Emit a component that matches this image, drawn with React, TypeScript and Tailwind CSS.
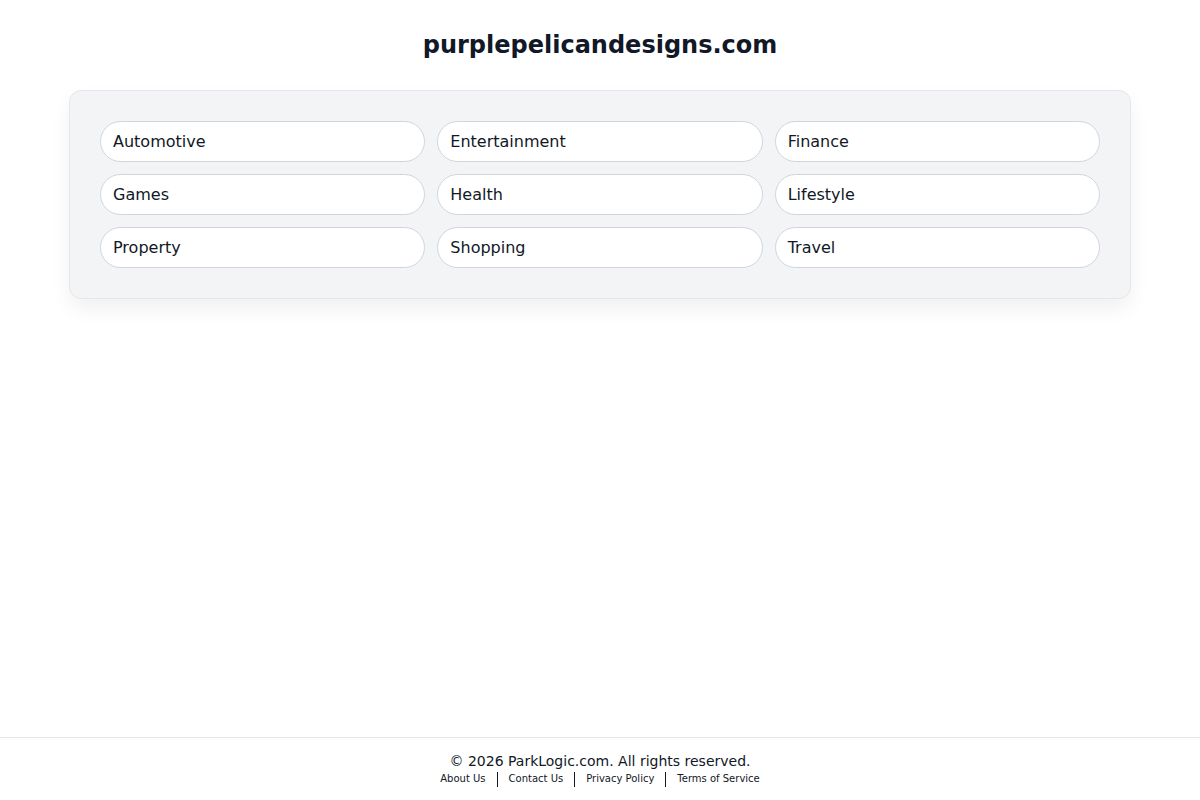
import React from "react";

const cats = [
  "Automotive",
  "Entertainment",
  "Finance",
  "Games",
  "Health",
  "Lifestyle",
  "Property",
  "Shopping",
  "Travel",
];

const links = ["About Us", "Contact Us", "Privacy Policy", "Terms of Service"];

export default function App() {
  return (
    <div
      className="min-h-screen flex flex-col bg-white text-gray-900"
      style={{ fontFamily: '"DejaVu Sans", sans-serif' }}
    >
      <main className="flex-1">
        <h1 className="text-center text-2xl font-bold text-[#111827] pt-[29px] leading-8">
          purplepelicandesigns.com
        </h1>
        <div className="w-[1062px] mx-auto mt-[29px] bg-[#f3f4f6] border border-[#e5e7eb] rounded-xl p-[30px] shadow-[0_10px_20px_rgba(0,0,0,0.06)]">
          <div className="grid grid-cols-3 gap-x-3 gap-y-3">
            {cats.map((c) => (
              <div
                key={c}
                className="h-[41px] flex items-center px-3 bg-white border border-[#d1d5db] rounded-full text-base text-[#111827]"
              >
                {c}
              </div>
            ))}
          </div>
        </div>
      </main>
      <footer className="border-t border-[#e5e7eb] pt-[14px] pb-[13px] text-center">
        <div className="text-sm leading-[18px] text-[#111827]">
          © 2026 ParkLogic.com. All rights reserved.
        </div>
        <div className="flex justify-center items-center mt-px text-[10px] leading-4 text-[#111827]">
          {links.map((l, i) => (
            <React.Fragment key={l}>
              {i > 0 && <span className="inline-block w-px h-[15px] bg-[#111827] mx-[11px]" />}
              <span>{l}</span>
            </React.Fragment>
          ))}
        </div>
      </footer>
    </div>
  );
}
